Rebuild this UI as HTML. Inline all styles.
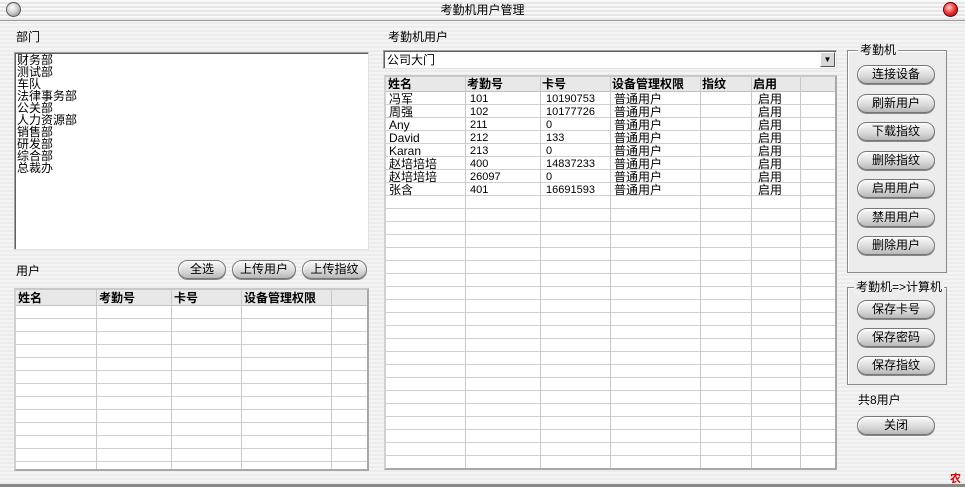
<!DOCTYPE html>
<html><head><meta charset="utf-8"><style>
*{margin:0;padding:0;box-sizing:border-box}
body{width:965px;height:487px;overflow:hidden;font:12px "Liberation Sans","Noto Sans CJK SC","WenQuanYi Zen Hei",sans-serif;color:#000;position:relative;
background:repeating-linear-gradient(#f4f4f4 0 2px,#ececec 2px 4px)}
.a{position:absolute;white-space:nowrap;line-height:13px}
.title{position:absolute;left:0;top:0;width:965px;height:21px;background:repeating-linear-gradient(#f8f8f8 0 2px,#e6e6e6 2px 4px);border-bottom:1px solid #9a9a9a;text-align:center;line-height:20px}
.box{position:absolute;background:#fff;border:1px solid #a0a0a0;border-right-color:#e0e0e0;border-bottom-color:#e0e0e0;box-shadow:inset 1px 1px 0 #606060}
.grid{position:absolute;background:#fff;border:2px solid #a8a8a8;border-top-color:#c8c8c8;border-left-color:#d0d0d0;overflow:hidden}
.hd{position:absolute;left:0;top:0;right:0;background:#e8e8e8;font-weight:bold;border-bottom:1px solid #c0c0c0}
.vl{position:absolute;top:0;bottom:0;width:1px;background:#c8c8c8}
.btn{position:absolute;height:19px;border:1px solid #777;border-radius:10px;background:linear-gradient(#fafafa,#d8d8d8 60%,#b8b8b8);box-shadow:inset 1px 1px 0 #fff,0 1px 0 #888;text-align:center;line-height:17px;font-size:12px}
.grp{position:absolute;border:1px solid #8a8a8a;box-shadow:inset 1px 1px 0 #fff;background:#ececec}
.grp span{position:absolute;top:-8px;left:10px;background:#eee;padding:0 2px;line-height:14px}
</style></head><body>
<div class="title">考勤机用户管理</div>
<div style="position:absolute;left:6px;top:2px;width:15px;height:15px;border-radius:50%;background:radial-gradient(circle at 40% 35%,#fff,#ccc 50%,#777);border:1px solid #555"></div>
<div style="position:absolute;left:943px;top:2px;width:15px;height:15px;border-radius:50%;background:radial-gradient(circle at 40% 35%,#fcc,#e33 50%,#800);border:1px solid #600"></div>

<div class="a" style="left:16px;top:31px">部门</div>
<div class="box" style="left:14px;top:52px;width:355px;height:198px;padding:1px 2px">
<div style="line-height:12px">财务部<br>测试部<br>车队<br>法律事务部<br>公关部<br>人力资源部<br>销售部<br>研发部<br>综合部<br>总裁办</div></div>

<div class="a" style="left:16px;top:265px">用户</div>
<div class="btn" style="left:178px;top:260px;width:48px">全选</div>
<div class="btn" style="left:232px;top:260px;width:64px">上传用户</div>
<div class="btn" style="left:302px;top:260px;width:65px">上传指纹</div>

<div class="grid" style="left:14px;top:288px;width:355px;height:183px;background:#fff repeating-linear-gradient(transparent 0 12px,#d0d0d0 12px 13px);background-position:0 16px">
<div class="hd" style="height:16px"></div>
<div class="vl" style="left:80px"></div><div class="vl" style="left:155px"></div><div class="vl" style="left:225px"></div><div class="vl" style="left:315px"></div>
<div class="a" style="left:2px;top:2px;font-weight:bold">姓名</div><div class="a" style="left:83px;top:2px;font-weight:bold">考勤号</div><div class="a" style="left:158px;top:2px;font-weight:bold">卡号</div><div class="a" style="left:228px;top:2px;font-weight:bold">设备管理权限</div>
</div>

<div class="a" style="left:388px;top:31px">考勤机用户</div>
<div class="box" style="left:383px;top:50px;width:454px;height:19px;padding:1px 3px;line-height:16px">公司大门
<div style="position:absolute;right:1px;top:1px;width:15px;height:15px;background:#d8d8d8;border:1px solid #fff;border-right-color:#555;border-bottom-color:#555;font-size:8px;text-align:center;line-height:13px">▼</div></div>

<div class="grid" style="left:384px;top:75px;width:453px;height:395px;background:#fff repeating-linear-gradient(transparent 0 12px,#d0d0d0 12px 13px);background-position:0 15px">
<div class="hd" style="height:15px"></div>
<div class="vl" style="left:79px"></div><div class="vl" style="left:154px"></div><div class="vl" style="left:224px"></div><div class="vl" style="left:314px"></div><div class="vl" style="left:365px"></div><div class="vl" style="left:414px"></div>
<div class="a" style="left:2px;top:1px;font-weight:bold">姓名</div><div class="a" style="left:81px;top:1px;font-weight:bold">考勤号</div><div class="a" style="left:156px;top:1px;font-weight:bold">卡号</div><div class="a" style="left:226px;top:1px;font-weight:bold">设备管理权限</div><div class="a" style="left:316px;top:1px;font-weight:bold">指纹</div><div class="a" style="left:367px;top:1px;font-weight:bold">启用</div>
<div class="a" style="left:3px;top:16px;line-height:13px">冯军<br>周强<br>Any<br>David<br>Karan<br>赵培培培<br>赵培培培<br>张含</div>
<div class="a" style="left:84px;top:16px;line-height:13px;font-size:11px">101<br>102<br>211<br>212<br>213<br>400<br>26097<br>401</div>
<div class="a" style="left:160px;top:16px;line-height:13px;font-size:11px">10190753<br>10177726<br>0<br>133<br>0<br>14837233<br>0<br>16691593</div>
<div class="a" style="left:228px;top:16px;line-height:13px">普通用户<br>普通用户<br>普通用户<br>普通用户<br>普通用户<br>普通用户<br>普通用户<br>普通用户</div>
<div class="a" style="left:372px;top:16px;line-height:13px">启用<br>启用<br>启用<br>启用<br>启用<br>启用<br>启用<br>启用</div>
</div>

<div class="grp" style="left:847px;top:50px;width:100px;height:223px"><span>考勤机</span></div>
<div class="btn" style="left:857px;top:65px;width:78px">连接设备</div>
<div class="btn" style="left:857px;top:94px;width:78px">刷新用户</div>
<div class="btn" style="left:857px;top:122px;width:78px">下载指纹</div>
<div class="btn" style="left:857px;top:151px;width:78px">删除指纹</div>
<div class="btn" style="left:857px;top:179px;width:78px">启用用户</div>
<div class="btn" style="left:857px;top:208px;width:78px">禁用用户</div>
<div class="btn" style="left:857px;top:236px;width:78px">删除用户</div>

<div class="grp" style="left:847px;top:287px;width:100px;height:98px"><span style="left:6px">考勤机=&gt;计算机</span></div>
<div class="btn" style="left:857px;top:300px;width:78px">保存卡号</div>
<div class="btn" style="left:857px;top:328px;width:78px">保存密码</div>
<div class="btn" style="left:857px;top:356px;width:78px">保存指纹</div>
<div class="a" style="left:858px;top:394px">共8用户</div>
<div class="btn" style="left:857px;top:416px;width:78px">关闭</div>

<div class="a" style="left:950px;top:473px;color:#d00;font-weight:bold;font-size:11px">农</div>
<div style="position:absolute;left:0;top:484px;width:965px;height:3px;background:#888"></div>
</body></html>
